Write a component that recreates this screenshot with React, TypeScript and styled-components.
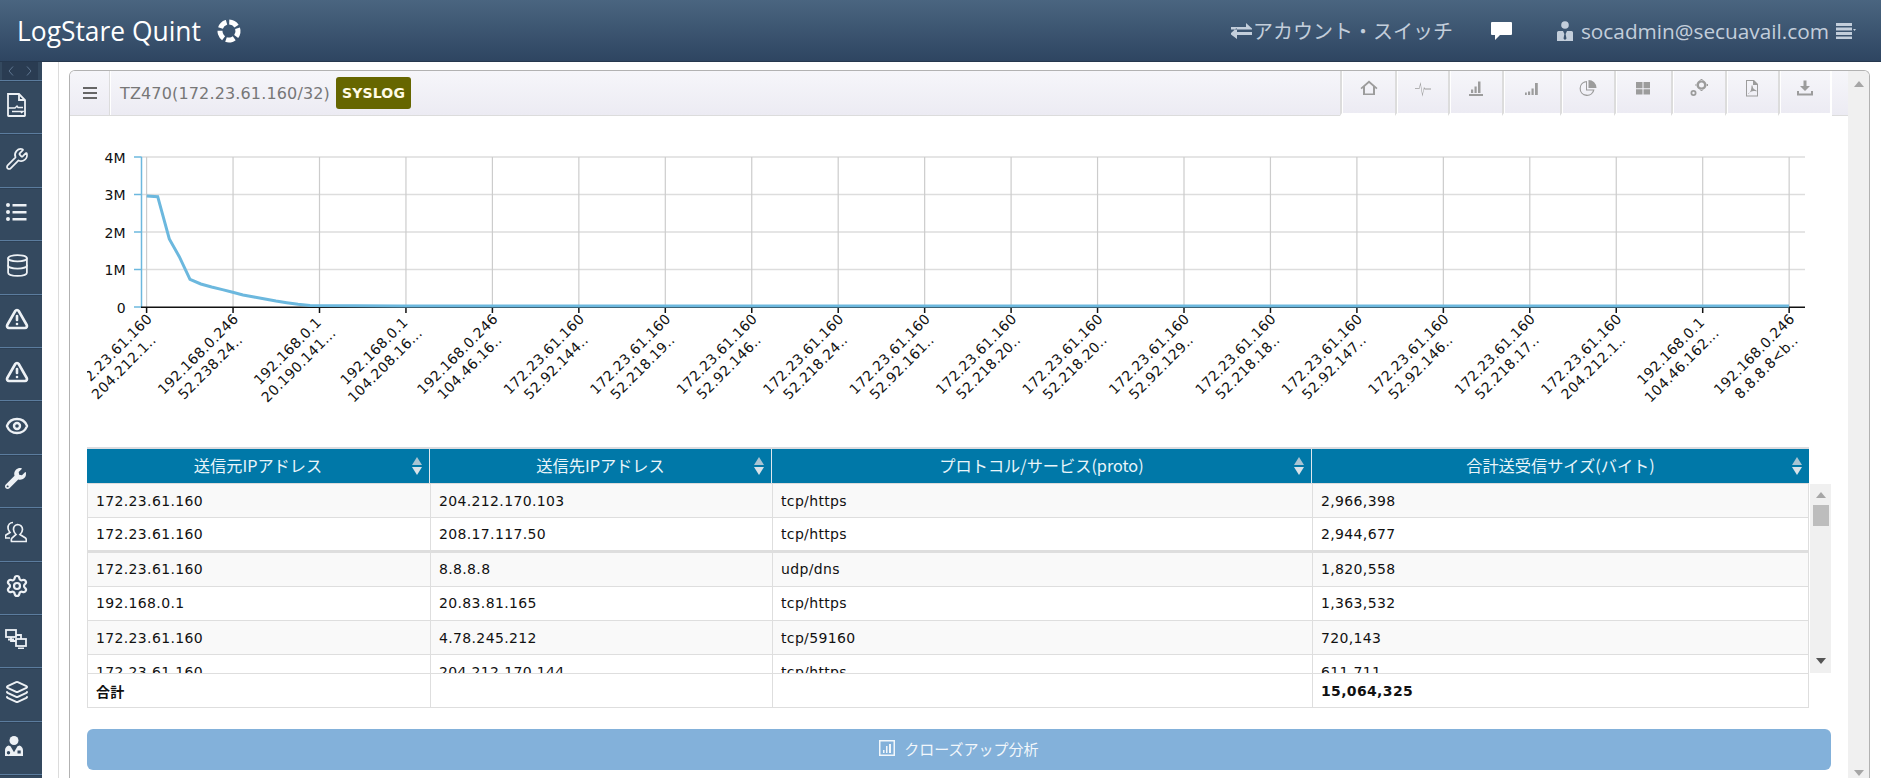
import React from "react";
import styled, { createGlobalStyle } from "styled-components";
import { Wrench, Database, TriangleAlert, Eye, Settings, Layers } from "lucide-react";
import { FaWrench } from "react-icons/fa";

const BODY_FONT = `"DejaVu Sans", "Noto Sans CJK JP", sans-serif`;
const HEAD_FONT = `"Open Sans", "Noto Sans CJK JP", sans-serif`;

const GlobalStyle = createGlobalStyle`
  html, body {
    margin: 0;
    height: 100%;
    overflow: hidden;
    background: #fff;
  }
  #root {
    height: 100%;
  }
`;

const Page = styled.div`
  height: 100vh;
  display: flex;
  flex-direction: column;
  font-family: ${BODY_FONT};
  color: #111;
`;

/* top bar */
const TopBar = styled.header`
  flex: 0 0 62px;
  display: flex;
  align-items: center;
  padding: 0 25px 0 17px;
  background: linear-gradient(#4a6580, #2e4561);
  border-bottom: 1px solid #26384e;
  box-sizing: border-box;
`;

const Brand = styled.div`
  font-family: ${HEAD_FONT};
  font-size: 26.4px;
  color: #fff;
  margin-right: 15px;
`;

const TopActions = styled.nav`
  margin-left: auto;
  display: flex;
  align-items: center;
  font-family: ${HEAD_FONT};
  font-size: 20px;
  color: #c3cedb;
`;

const TopItem = styled.div<{ $gap?: number }>`
  display: flex;
  align-items: center;
  margin-left: ${(p) => p.$gap ?? 0}px;
  gap: 1px;
`;

const UserName = styled.span`
  font-size: 20.8px;
  margin: 0 6px 0 6px;
`;

/* left rail */
const Workspace = styled.div`
  flex: 1;
  min-height: 0;
  display: flex;
  overflow: hidden;
`;

const Rail = styled.aside`
  flex: 0 0 42px;
  background: #34495f;
  display: flex;
  flex-direction: column;
`;

const RailToggle = styled.div`
  flex: 0 0 18px;
  margin: 0 4px 0 2px;
  background: #2a3c52;
  display: flex;
  align-items: center;
  justify-content: space-around;
  color: #5f7690;
`;

const RailItem = styled.div`
  flex: 0 0 53.4px;
  box-sizing: border-box;
  border-top: 1px solid #5b7c9e;
  box-shadow: inset 0 1px 0 #2d4055;
  display: flex;
  align-items: center;
  padding: 0 0 4px 5px;
  color: #edf1f5;
`;

/* main area */
const Main = styled.main`
  flex: 1;
  min-width: 0;
  margin-left: 16px;
  border-left: 1px solid #dcdcdc;
  padding: 8px 11px 0 10px;
  display: flex;
`;

const Panel = styled.section`
  flex: 1;
  min-width: 0;
  display: flex;
  border: 1px solid #b2b2b2;
  border-bottom: none;
  border-radius: 6px 6px 0 0;
  overflow: hidden;
`;

const PanelContent = styled.div`
  flex: 1;
  min-width: 0;
`;

const PanelHeading = styled.div`
  height: 45px;
  box-sizing: border-box;
  display: flex;
  align-items: stretch;
  background: linear-gradient(#f6f6fa, #ecebf3);
  border-bottom: 1px solid #dcdcdc;
`;

const MenuCell = styled.div`
  flex: 0 0 39px;
  display: flex;
  align-items: center;
  justify-content: center;
  border-right: 1px solid #dcdcdc;
  box-shadow: 1px 0 0 #fff;
  color: #666;
`;

const HeadingTitle = styled.div`
  display: flex;
  align-items: center;
  margin-left: 10px;
  font-size: 16px;
  letter-spacing: 0.15px;
  color: #777;
`;

const Badge = styled.span`
  margin-left: 6px;
  width: 75px;
  height: 32px;
  display: flex;
  align-items: center;
  justify-content: center;
  background: #666600;
  border-radius: 3px;
  color: #fffbe6;
  font-size: 14px;
  font-weight: 700;
`;

const Tabs = styled.div`
  margin-left: auto;
  margin-right: 16px;
  display: flex;
  margin-bottom: -1px;
`;

const Tab = styled.div<{ $w: number }>`
  width: ${(p) => p.$w}px;
  box-sizing: border-box;
  display: flex;
  align-items: flex-start;
  justify-content: center;
  padding-top: 8px;
  border-left: 2px solid #dcdcdc;
  box-shadow: inset 1px 0 0 #fff;
  border-bottom: 3px solid #fff;
  background: linear-gradient(#f6f6fa, #ecebf3);
  &:last-child {
    border-right: 2px solid #fff;
  }
`;

const PanelBody = styled.div`
  padding: 0 17px;
`;

const ChartSvg = styled.svg`
  display: block;
  width: 1744px;
  height: 331px;
`;

/* table */
const TableBox = styled.div`
  width: 1744px;
`;

const COLS = "343px 342px 540px 497px";

const HeadRow = styled.div`
  width: 1722px;
  display: grid;
  grid-template-columns: ${COLS};
  box-sizing: border-box;
  height: 37px;
  border-top: 2px solid #dcdce0;
  border-bottom: 1px solid #dcdcdc;
  background: #0078a8;
`;

const HeadCell = styled.div`
  position: relative;
  display: flex;
  align-items: center;
  justify-content: center;
  padding-bottom: 3px;
  color: #e9f5fa;
  font-family: "Noto Sans CJK JP", sans-serif;
  font-size: 16.2px;
  border-right: 1px solid #dfe8ee;
  &:last-child {
    border-right: none;
  }
`;

const SortMark = styled.span`
  position: absolute;
  right: 7px;
  top: 8px;
  display: flex;
  flex-direction: column;
  gap: 2px;
  &::before,
  &::after {
    content: "";
    border-left: 5px solid transparent;
    border-right: 5px solid transparent;
  }
  &::before {
    border-bottom: 8px solid #a9c4d2;
  }
  &::after {
    border-top: 8px solid #d8e2e8;
  }
`;

const BodyWrap = styled.div`
  display: flex;
  height: 189px;
`;

const BodyRows = styled.div`
  width: 1722px;
  overflow: hidden;
`;

const Row = styled.div<{ $thick?: boolean; $odd: boolean }>`
  display: grid;
  grid-template-columns: ${COLS};
  height: 34.25px;
  box-sizing: border-box;
  border-bottom: ${(p) => (p.$thick ? "3px" : "1.5px")} solid #dedede;
  border-left: 1px solid #dedede;
  border-right: 1px solid #dedede;
  background: ${(p) => (p.$odd ? "#f9f9f9" : "#fff")};
`;

const Cell = styled.div<{ $bold?: boolean }>`
  display: flex;
  align-items: center;
  padding-left: 8px;
  font-size: 14px;
  letter-spacing: 0.35px;
  font-weight: ${(p) => (p.$bold ? 700 : 400)};
  border-right: 1.5px solid #dedede;
  &:last-child {
    border-right: none;
  }
`;

const TinyBar = styled.div`
  flex: 0 0 21px;
  margin-left: 1px;
  background: #f0f0f0;
  display: flex;
  flex-direction: column;
  align-items: center;
  padding: 8px 0 9px;
  box-sizing: border-box;
`;

const Thumb = styled.div`
  width: 16px;
  height: 21px;
  margin-top: 7px;
  background: #bdbdbd;
`;

const ArrowUp = styled.div`
  width: 0;
  border-left: 5px solid transparent;
  border-right: 5px solid transparent;
  border-bottom: 6px solid #a6a6a6;
`;

const ArrowDown = styled.div<{ $dark?: boolean }>`
  width: 0;
  margin-top: auto;
  border-left: 5px solid transparent;
  border-right: 5px solid transparent;
  border-top: 6px solid ${(p) => (p.$dark ? "#555" : "#a6a6a6")};
`;

const FootRow = styled.div`
  width: 1722px;
  height: 35px;
  box-sizing: border-box;
  display: grid;
  grid-template-columns: ${COLS};
  border: 1.5px solid #dedede;
  background: #fff;
`;

const CloseUpButton = styled.button`
  display: flex;
  align-items: center;
  justify-content: center;
  gap: 9px;
  width: 1744px;
  height: 41px;
  margin-top: 21px;
  padding: 0 0 3px;
  border: none;
  border-radius: 6px;
  background: #83b1da;
  color: #f2f7fb;
  font-family: "Noto Sans CJK JP", sans-serif;
  font-size: 15px;
`;

const PageBar = styled(TinyBar)`
  margin-left: 0;
  padding: 10px 0 2px;
`;

/* data */
const rows = [
  ["172.23.61.160", "204.212.170.103", "tcp/https", "2,966,398"],
  ["172.23.61.160", "208.17.117.50", "tcp/https", "2,944,677"],
  ["172.23.61.160", "8.8.8.8", "udp/dns", "1,820,558"],
  ["192.168.0.1", "20.83.81.165", "tcp/https", "1,363,532"],
  ["172.23.61.160", "4.78.245.212", "tcp/59160", "720,143"],
  ["172.23.61.160", "204.212.170.144", "tcp/https", "611,711"],
];

const heads = ["送信元IPアドレス", "送信先IPアドレス", "プロトコル/サービス(proto)", "合計送受信サイズ(バイト)"];

const xLabels: [string, string][] = [
  ["172.23.61.160", "204.212.1.."],
  ["192.168.0.246", "52.238.24.."],
  ["192.168.0.1", "20.190.141..."],
  ["192.168.0.1", "104.208.16..."],
  ["192.168.0.246", "104.46.16.."],
  ["172.23.61.160", "52.92.144.."],
  ["172.23.61.160", "52.218.19.."],
  ["172.23.61.160", "52.92.146.."],
  ["172.23.61.160", "52.218.24.."],
  ["172.23.61.160", "52.92.161.."],
  ["172.23.61.160", "52.218.20.."],
  ["172.23.61.160", "52.218.20.."],
  ["172.23.61.160", "52.92.129.."],
  ["172.23.61.160", "52.218.18.."],
  ["172.23.61.160", "52.92.147.."],
  ["172.23.61.160", "52.92.146.."],
  ["172.23.61.160", "52.218.17.."],
  ["172.23.61.160", "204.212.1.."],
  ["192.168.0.1", "104.46.162..."],
  ["192.168.0.246", "8.8.8.8<b.."],
];

const linePoints =
  "146.7,196 157.7,196.7 169.3,239 179.3,256.7 190,279.3 200.8,284 211.6,287 222.4,289.6 232.7,292.3 243,295 254,297 265,299 276,301 286.7,302.7 298,304.3 310,305.5 400,306 1789,306";

const tickX = (i: number) => 146.6 + 86.45 * i;

function TrafficChart() {
  const ys = [157, 194.5, 232, 269.5, 307];
  const names = ["4M", "3M", "2M", "1M", "0"];
  return (
    <ChartSvg viewBox="87 116 1744 331">
      {ys.slice(0, 4).map((y) => (
        <line key={y} x1={141} x2={1805} y1={y} y2={y} stroke="#dddddd" strokeWidth="1.5" />
      ))}
      {xLabels.map((_, i) => (
        <line key={i} x1={tickX(i)} x2={tickX(i)} y1={157} y2={307} stroke="#cccccc" strokeWidth="1.2" />
      ))}
      {ys.map((y, i) => (
        <g key={y}>
          <line x1={134} x2={141.5} y1={y} y2={y} stroke="#6cb8de" strokeWidth="1.5" />
          <text x={126} y={y + 5.5} textAnchor="end" fontSize="14" letterSpacing="0.3" fill="#111" fontFamily="DejaVu Sans">
            {names[i]}
          </text>
        </g>
      ))}
      <line x1={141.5} x2={141.5} y1={157} y2={307} stroke="#6cb8de" strokeWidth="1.5" />
      <line x1={141} x2={1805} y1={307.2} y2={307.2} stroke="#111" strokeWidth="1.5" />
      {xLabels.map(([a, b], i) => {
        const x = tickX(i);
        const shiftA = a === "192.168.0.1" ? 3 : 0;
        const shiftB = b.endsWith("...") ? 2 : 0;
        return (
          <g key={i} fontFamily="DejaVu Sans" fontSize="14" letterSpacing="0.35" fill="#111" textAnchor="middle">
            <line x1={x} x2={x} y1={307} y2={313} stroke="#111" strokeWidth="1.5" />
            <text transform={`translate(${x - 35 + shiftA} ${354 - shiftA}) rotate(-45)`} y={5}>
              {a}
            </text>
            <text transform={`translate(${x - 23 + shiftB} ${367 - shiftB}) rotate(-45)`} y={5}>
              {b}
            </text>
          </g>
        );
      })}
      <polyline points={linePoints} fill="none" stroke="#6cb8de" strokeWidth="3" />
    </ChartSvg>
  );
}

/* icons */
const RingLogo = () => (
  <svg width="26" height="26" viewBox="0 0 26 26">
    <circle cx="13" cy="13" r="9" fill="none" stroke="#fff" strokeWidth="5" strokeDasharray="8.6 2.7" transform="rotate(-18 13 13)" />
  </svg>
);

const SwapIcon = () => (
  <svg width="21" height="17" viewBox="0 0 21 17" fill="#c3cedb">
    <path d="M0 5h15V1l6 5.500v1H0zM21 10H6V6.500H5L0 11v1.500l6 4.500v-4h15z" />
  </svg>
);

const ChatIcon = () => (
  <svg width="21" height="18" viewBox="0 0 21 18" fill="#fff">
    <path d="M1 0h19a1 1 0 0 1 1 1v11a1 1 0 0 1-1 1H9l-5 5v-5H1a1 1 0 0 1-1-1V1a1 1 0 0 1 1-1z" />
  </svg>
);

const SuitIcon = () => (
  <svg width="18" height="20" viewBox="0 0 18 20" fill="#c3cedb">
    <circle cx="9" cy="4" r="3.800" />
    <path d="M1 20v-8.500a1.500 1.500 0 0 1 1.500-1.500H7l1.400 3-.9 4.500L9 19l1.500-1.500-.9-4.500L11 10h4.500a1.500 1.500 0 0 1 1.500 1.500V20z" />
  </svg>
);

const LinesIcon = () => (
  <svg width="20" height="18" viewBox="0 0 20 18" fill="#c3cedb">
    <path d="M0 1h16v3H0zM0 5.500h16v3H0zM0 10h16v3H0zM0 14.500h16V17H0zM17 7h3l-1.500 2z" />
  </svg>
);

const BurgerIcon = () => (
  <svg width="14" height="12" viewBox="0 0 14 12" fill="#666">
    <path d="M0 0h14v2H0zM0 5h14v2H0zM0 10h14v2H0z" />
  </svg>
);

const Chevrons = () => (
  <>
    <svg width="6" height="10" viewBox="0 0 6 10" fill="none" stroke="currentColor"><path d="M5 0.500 1 5l4 4.500" /></svg>
    <svg width="6" height="10" viewBox="0 0 6 10" fill="none" stroke="currentColor"><path d="M1 0.500 5 5 1 9.500" /></svg>
  </>
);

const FileArrowIcon = () => (
  <svg width="22" height="24" viewBox="0 0 22 24" fill="none" stroke="currentColor" strokeWidth="1.800">
    <path d="M3 1h11l6 6v15.500a.5.500 0 0 1-.5.500h-16a.5.500 0 0 1-.5-.5z" />
    <path d="M14 1v6h6" />
    <path d="M3 15h7l2-2 1 1.500h5M7 18.500h11l-2 1.500" strokeWidth="1.400" />
  </svg>
);

const BulletListIcon = () => (
  <svg width="22" height="20" viewBox="0 0 22 20" fill="currentColor">
    <circle cx="3" cy="3" r="2" />
    <circle cx="3" cy="10" r="2" />
    <circle cx="3" cy="17" r="2" />
    <path d="M7.500 2h14v2.500h-14zM7.500 9h14v2.500h-14zM7.500 16h14v2.500h-14z" />
  </svg>
);

const PeopleIcon = () => (
  <svg width="22" height="22" viewBox="0 0 22 22" fill="none" stroke="currentColor" strokeWidth="1.700">
    <path d="M12.500 3.500a5 5 0 0 1 5 5c0 2.500-1.500 4-2.500 5l5.500 3.500c1 .7.800 3.500.8 3.500H6.500s-.5-2.500.5-3.500L11 13.500c-1-1-2.500-2.500-2.500-5a5 5 0 0 1 4-5z" />
    <path d="M8 1.500C5 1.500 3 4 3 7c0 2 1 3.300 2 4.500L1 14c-.8.600-.5 3-.5 3H5" />
  </svg>
);

const NetworkIcon = () => (
  <svg width="22" height="20" viewBox="0 0 22 20" fill="none" stroke="currentColor" strokeWidth="1.800">
    <rect x="1" y="1" width="10" height="7" />
    <rect x="11" y="10" width="10" height="7" />
    <path d="M6 8v4h5M16 10V6h-5M13 19.500h6M3 10.500h6" />
  </svg>
);

const DoctorIcon = () => (
  <svg width="18" height="20" viewBox="0 0 18 20" fill="currentColor">
    <circle cx="9" cy="4.500" r="4.500" />
    <path d="M3.500 9.500C1.200 10.500 0 12 0 14.500V20h18v-5.500c0-2.500-1.200-4-3.500-5l-2 .8-3.500 6-3.500-6zM3.500 15a1.700 1.700 0 1 1 0 3.400 1.700 1.700 0 0 1 0-3.400zm9 2.500v-3h3.200v3z" fillRule="evenodd" />
  </svg>
);

const railIcons = [
  <FileArrowIcon />,
  <Wrench size={24} strokeWidth={1.7} />,
  <BulletListIcon />,
  <Database size={25} strokeWidth={1.7} />,
  <TriangleAlert size={24} strokeWidth={2.6} />,
  <TriangleAlert size={24} strokeWidth={2.6} />,
  <Eye size={24} strokeWidth={2.4} />,
  <FaWrench size={21} />,
  <PeopleIcon />,
  <Settings size={24} strokeWidth={2.2} />,
  <NetworkIcon />,
  <Layers size={24} strokeWidth={2} />,
  <DoctorIcon />,
  null,
];

const tabIcons = [
  <path d="M9 1.500.5 9l1.200 1.200L3 9v7h12V9l1.300 1.200L17.500 9zM5 14.500V7.500l4-3.500 4 3.500v7z" />,
  <path d="M1 9.200h4L6.500 3 8.500 15l1.500-7 1 1.500h6v1h-6.500l-.4-.8-1.700 8-2-12-1 4.300H1z" />,
  <path d="M2 15h14v2H2zM4 10.500h2.200V14H4zM7.500 7.500h2.200V14H7.500zM11 2.500h2.500V14H11z" />,
  <path d="M2 13.500h1.800V16H2zM5 12.500h2.200V16H5zM8.500 9.500h2.200V16H8.500zM12 4h2.800v12H12z" />,
  <path fillRule="evenodd" d="M8 2a7.500 7.500 0 1 0 7.500 8.500H8zm-1 1.200V11.500h7A6.300 6.300 0 1 1 7 3.200zM9.500 1v8h8A8 8 0 0 0 9.500 1z" />,
  <path d="M2 3h6.500v6.200H2zM9.500 3H16v6.200H9.500zM2 10.200h6.500V15.500H2zM9.500 10.200H16V15.500H9.500z" />,
  <path fillRule="evenodd" d="M11.500 1a5 5 0 1 1 0 10 5 5 0 0 1 0-10zm0 2.500a2.500 2.500 0 1 0 0 5 2.500 2.500 0 0 0 0-5zM3.500 11a3 3 0 1 1 0 6 3 3 0 0 1 0-6zm0 1.800a1.200 1.200 0 1 0 0 2.400 1.200 1.200 0 0 0 0-2.400zM10.500 0h2v1.500h-2zM10.500 10.500h2V12h-2zM16 5h2v2h-2zM5.500 5H7v2H5.500z" />,
  <path fillRule="evenodd" d="M3 1h8l4 4v12.500H3zm1 1v14.500h10V6h-4V2zm1 12.500c3-1 3.500-5 3.500-8h1c0 2 1 4 4 5v1c-3-1-6-.5-8 2.500z" />,
  <path d="M7.500 1.500h3V7H14l-5 5-5-5h3.500zM1 12h2v2.500h12V12h2v4.500H1z" />,
];

const tabWidths = [55, 53, 53.5, 58.5, 54, 56.5, 54, 53.5, 54];

export default function App() {
  return (
    <Page>
      <GlobalStyle />
      <TopBar>
        <Brand>LogStare Quint</Brand>
        <RingLogo />
        <TopActions>
          <TopItem>
            <SwapIcon />
            アカウント・スイッチ
          </TopItem>
          <TopItem $gap={38}>
            <ChatIcon />
          </TopItem>
          <TopItem $gap={44}>
            <SuitIcon />
            <UserName>socadmin@secuavail.com</UserName>
            <LinesIcon />
          </TopItem>
        </TopActions>
      </TopBar>
      <Workspace>
        <Rail>
          <RailToggle>
            <Chevrons />
          </RailToggle>
          {railIcons.map((icon, i) => (
            <RailItem key={i}>{icon}</RailItem>
          ))}
        </Rail>
        <Main>
          <Panel>
            <PanelContent>
              <PanelHeading>
                <MenuCell>
                  <BurgerIcon />
                </MenuCell>
                <HeadingTitle>
                  TZ470(172.23.61.160/32)
                  <Badge>SYSLOG</Badge>
                </HeadingTitle>
                <Tabs>
                  {tabIcons.map((d, i) => (
                    <Tab key={i} $w={tabWidths[i]}>
                      <svg width="18" height="18" viewBox="0 0 18 18" fill="#9c9c9c">
                        {d}
                      </svg>
                    </Tab>
                  ))}
                </Tabs>
              </PanelHeading>
              <PanelBody>
                <TrafficChart />
                <TableBox>
                  <HeadRow>
                    {heads.map((h) => (
                      <HeadCell key={h}>
                        {h}
                        <SortMark />
                      </HeadCell>
                    ))}
                  </HeadRow>
                  <BodyWrap>
                    <BodyRows>
                      {rows.map((r, i) => (
                        <Row key={i} $odd={i % 2 === 0} $thick={i === 1}>
                          {r.map((c, j) => (
                            <Cell key={j}>{c}</Cell>
                          ))}
                        </Row>
                      ))}
                    </BodyRows>
                    <TinyBar>
                      <ArrowUp />
                      <Thumb />
                      <ArrowDown $dark />
                    </TinyBar>
                  </BodyWrap>
                  <FootRow>
                    <Cell $bold>合計</Cell>
                    <Cell />
                    <Cell />
                    <Cell $bold>15,064,325</Cell>
                  </FootRow>
                </TableBox>
                <CloseUpButton>
                  <svg width="16" height="16" viewBox="0 0 16 16" fill="#f2f7fb">
                    <path fillRule="evenodd" d="M0 0h16v16H0zm1.500 1.500v13h13v-13zM4 10h1.500v3H4zM7 6h1.500v7H7zM10 4h2v9h-2z" />
                  </svg>
                  クローズアップ分析
                </CloseUpButton>
              </PanelBody>
            </PanelContent>
            <PageBar>
              <ArrowUp />
              <ArrowDown />
            </PageBar>
          </Panel>
        </Main>
      </Workspace>
    </Page>
  );
}
